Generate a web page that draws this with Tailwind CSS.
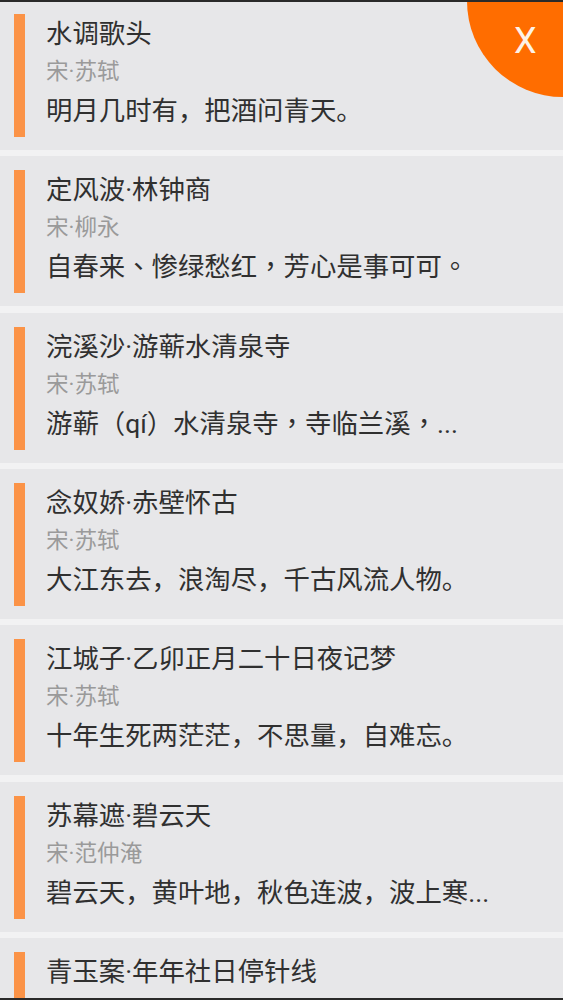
<!DOCTYPE html>
<html lang="zh">
<head>
  <meta charset="UTF-8">
  <script src="https://cdn.jsdelivr.net/npm/@tailwindcss/browser@4"></script>
</head>
<body class="h-[1000px] overflow-hidden bg-[#f2f2f3] font-['Roboto','Noto_Sans_CJK_SC',sans-serif]">
  <div class="relative h-[1000px] overflow-hidden">
    <div class="flex flex-col gap-[6.33px]">
      <div class="flex h-[150px] shrink-0 bg-[#e7e7e9] pl-[14px] pt-[14px]">
        <div class="h-[123px] w-[11px] bg-[#fb9347]"></div>
        <div class="ml-[21px]">
          <div class="text-[26.4px] leading-[40px] text-[#303030]">水调歌头</div>
          <div class="text-[22.6px] leading-[36px] text-[#9a9a9a]">宋·苏轼</div>
          <div class="text-[26.4px] leading-[42px] text-[#303030]">明月几时有，把酒问青天。</div>
        </div>
      </div>
      <div class="flex h-[150px] shrink-0 bg-[#e7e7e9] pl-[14px] pt-[14px]">
        <div class="h-[123px] w-[11px] bg-[#fb9347]"></div>
        <div class="ml-[21px]">
          <div class="text-[26.4px] leading-[40px] text-[#303030]">定风波·林钟商</div>
          <div class="text-[22.6px] leading-[36px] text-[#9a9a9a]">宋·柳永</div>
          <div class="text-[26.4px] leading-[42px] text-[#303030]">自春来<span lang="zh-TW" class="font-['Noto_Sans_CJK_TC'] leading-none">、</span>惨绿愁红<span lang="zh-TW" class="font-['Noto_Sans_CJK_TC'] leading-none">，</span>芳心是事可可<span lang="zh-TW" class="font-['Noto_Sans_CJK_TC'] leading-none">。</span></div>
        </div>
      </div>
      <div class="flex h-[150px] shrink-0 bg-[#e7e7e9] pl-[14px] pt-[14px]">
        <div class="h-[123px] w-[11px] bg-[#fb9347]"></div>
        <div class="ml-[21px]">
          <div class="text-[26.4px] leading-[40px] text-[#303030]">浣溪沙·游蕲水清泉寺</div>
          <div class="text-[22.6px] leading-[36px] text-[#9a9a9a]">宋·苏轼</div>
          <div class="text-[26.4px] leading-[42px] text-[#303030]">游蕲（qí）水清泉寺<span lang="zh-TW" class="font-['Noto_Sans_CJK_TC'] leading-none">，</span>寺临兰溪<span lang="zh-TW" class="font-['Noto_Sans_CJK_TC'] leading-none">，</span>...</div>
        </div>
      </div>
      <div class="flex h-[150px] shrink-0 bg-[#e7e7e9] pl-[14px] pt-[14px]">
        <div class="h-[123px] w-[11px] bg-[#fb9347]"></div>
        <div class="ml-[21px]">
          <div class="text-[26.4px] leading-[40px] text-[#303030]">念奴娇·赤壁怀古</div>
          <div class="text-[22.6px] leading-[36px] text-[#9a9a9a]">宋·苏轼</div>
          <div class="text-[26.4px] leading-[42px] text-[#303030]">大江东去，浪淘尽，千古风流人物。</div>
        </div>
      </div>
      <div class="flex h-[150px] shrink-0 bg-[#e7e7e9] pl-[14px] pt-[14px]">
        <div class="h-[123px] w-[11px] bg-[#fb9347]"></div>
        <div class="ml-[21px]">
          <div class="text-[26.4px] leading-[40px] text-[#303030]">江城子·乙卯正月二十日夜记梦</div>
          <div class="text-[22.6px] leading-[36px] text-[#9a9a9a]">宋·苏轼</div>
          <div class="text-[26.4px] leading-[42px] text-[#303030]">十年生死两茫茫，不思量，自难忘。</div>
        </div>
      </div>
      <div class="flex h-[150px] shrink-0 bg-[#e7e7e9] pl-[14px] pt-[14px]">
        <div class="h-[123px] w-[11px] bg-[#fb9347]"></div>
        <div class="ml-[21px]">
          <div class="text-[26.4px] leading-[40px] text-[#303030]">苏幕遮·碧云天</div>
          <div class="text-[22.6px] leading-[36px] text-[#9a9a9a]">宋·范仲淹</div>
          <div class="text-[26.4px] leading-[42px] text-[#303030]">碧云天，黄叶地，秋色连波，波上寒...</div>
        </div>
      </div>
      <div class="flex h-[150px] shrink-0 bg-[#e7e7e9] pl-[14px] pt-[14px]">
        <div class="h-[123px] w-[11px] bg-[#fb9347]"></div>
        <div class="ml-[21px]">
          <div class="text-[26.4px] leading-[40px] text-[#303030]">青玉案·年年社日停针线</div>
        </div>
      </div>
    </div>
    <div class="absolute right-0 top-0 h-[97px] w-[96px] rounded-bl-[97px] bg-[#ff6d00] pl-[47px] pt-[14px] text-[36px] leading-[54px] text-[#fdf3e8]">X</div>
    <div class="absolute inset-x-0 top-0 h-[2px] bg-[#2a2a2a]"></div>
    <div class="absolute inset-x-0 bottom-0 h-[2px] bg-[#2a2a2a]"></div>
  </div>
</body>
</html>
